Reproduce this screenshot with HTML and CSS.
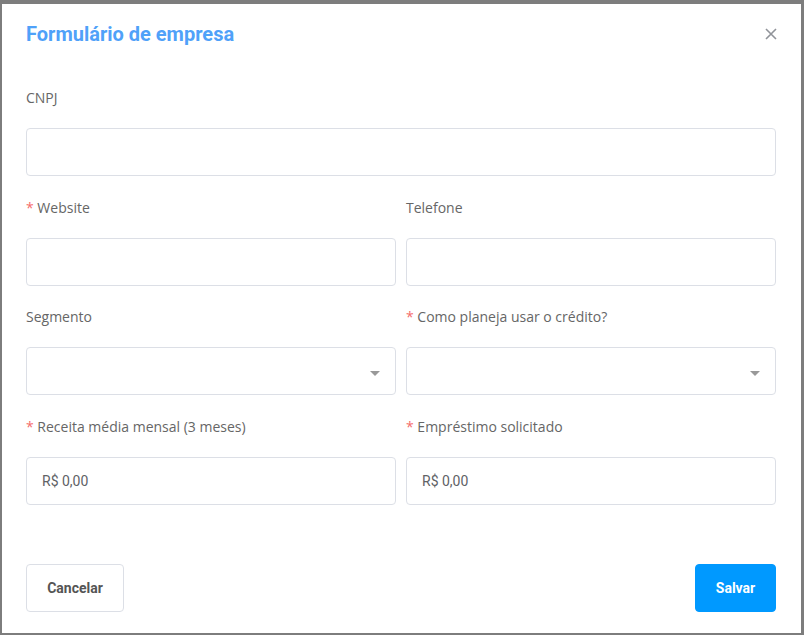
FILE: index.html
```html
<!DOCTYPE html>
<html lang="pt-BR">
<head>
<meta charset="utf-8">
<title>Formulário de empresa</title>
<link rel="stylesheet" href="styles.css">
</head>
<body>
<div class="modal">
  <header class="modal-header">
    <h1 class="modal-title">Formulário de empresa</h1>
    <button class="close-btn" aria-label="Fechar">
      <svg width="12" height="12" viewBox="0 0 12 12"><path d="M1 1L11 11M11 1L1 11" stroke="#909399" stroke-width="1.6" fill="none"/></svg>
    </button>
  </header>
  <form class="modal-body">
    <div class="field full">
      <label class="label">CNPJ</label>
      <div class="input"></div>
    </div>
    <div class="field">
      <label class="label"><span class="req">*</span> Website</label>
      <div class="input"></div>
    </div>
    <div class="field">
      <label class="label">Telefone</label>
      <div class="input"></div>
    </div>
    <div class="field">
      <label class="label">Segmento</label>
      <div class="input select"><span class="caret"></span></div>
    </div>
    <div class="field">
      <label class="label"><span class="req">*</span> Como planeja usar o crédito?</label>
      <div class="input select"><span class="caret"></span></div>
    </div>
    <div class="field">
      <label class="label"><span class="req">*</span> Receita média mensal (3 meses)</label>
      <div class="input"><span class="value">R$ 0,00</span></div>
    </div>
    <div class="field">
      <label class="label"><span class="req">*</span> Empréstimo solicitado</label>
      <div class="input"><span class="value">R$ 0,00</span></div>
    </div>
  </form>
  <footer class="modal-footer">
    <button class="btn btn-default">Cancelar</button>
    <button class="btn btn-primary">Salvar</button>
  </footer>
</div>
</body>
</html>
```

FILE: styles.css
```css
* { box-sizing: border-box; }
html, body { margin: 0; padding: 0; }
body {
  width: 804px;
  height: 635px;
  background: #7d7d7d;
  overflow: hidden;
  display: flex;
}
.modal {
  margin: 4px 3px 2px 2px;
  flex: 1;
  background: #fff;
  display: flex;
  flex-direction: column;
  padding: 0 25px 21px 24px;
}
.modal-header {
  display: flex;
  align-items: center;
  justify-content: space-between;
  padding-top: 18px;
  height: 42px;
}
.modal-title {
  margin: 0;
  font-family: Roboto, "Liberation Sans", sans-serif;
  font-weight: 700;
  font-size: 20px;
  line-height: 24px;
  color: #4fa1f9;
}
.close-btn {
  border: 0;
  background: none;
  padding: 0;
  width: 12px;
  height: 12px;
  margin-right: -1px;
  display: flex;
}
.modal-body {
  margin: 42px 0 0 0;
  display: grid;
  grid-template-columns: 1fr 1fr;
  column-gap: 10px;
}
.field { margin-bottom: 21.67px; display: flex; flex-direction: column; }
.field.full { grid-column: 1 / span 2; }
.label {
  font-family: "Open Sans", "Liberation Sans", sans-serif;
  font-size: 14px;
  line-height: 20px;
  color: #666;
  margin-bottom: 20px;
}
.req { color: #f56c6c; }
.input {
  height: 48px;
  border: 1px solid #dcdfe6;
  border-radius: 4px;
  display: flex;
  align-items: center;
  padding: 0 15px;
}
.value {
  font-family: Roboto, "Liberation Sans", sans-serif;
  font-size: 14px;
  color: #606266;
}
.select { justify-content: flex-end; padding-right: 15px; }
.caret {
  width: 0;
  height: 0;
  border-left: 5px solid transparent;
  border-right: 5px solid transparent;
  border-top: 5px solid #999;
  margin-top: 4px;
}
.modal-footer {
  margin-top: auto;
  display: flex;
  justify-content: space-between;
}
.btn {
  height: 48px;
  border-radius: 4px;
  font-family: Roboto, "Liberation Sans", sans-serif;
  font-weight: 700;
  font-size: 14px;
  cursor: pointer;
}
.btn-default {
  width: 98px;
  background: #fff;
  border: 1px solid #dcdfe6;
  color: #555;
}
.btn-primary {
  width: 81px;
  background: #0099ff;
  border: 1px solid #0099ff;
  color: #fff;
}
```
